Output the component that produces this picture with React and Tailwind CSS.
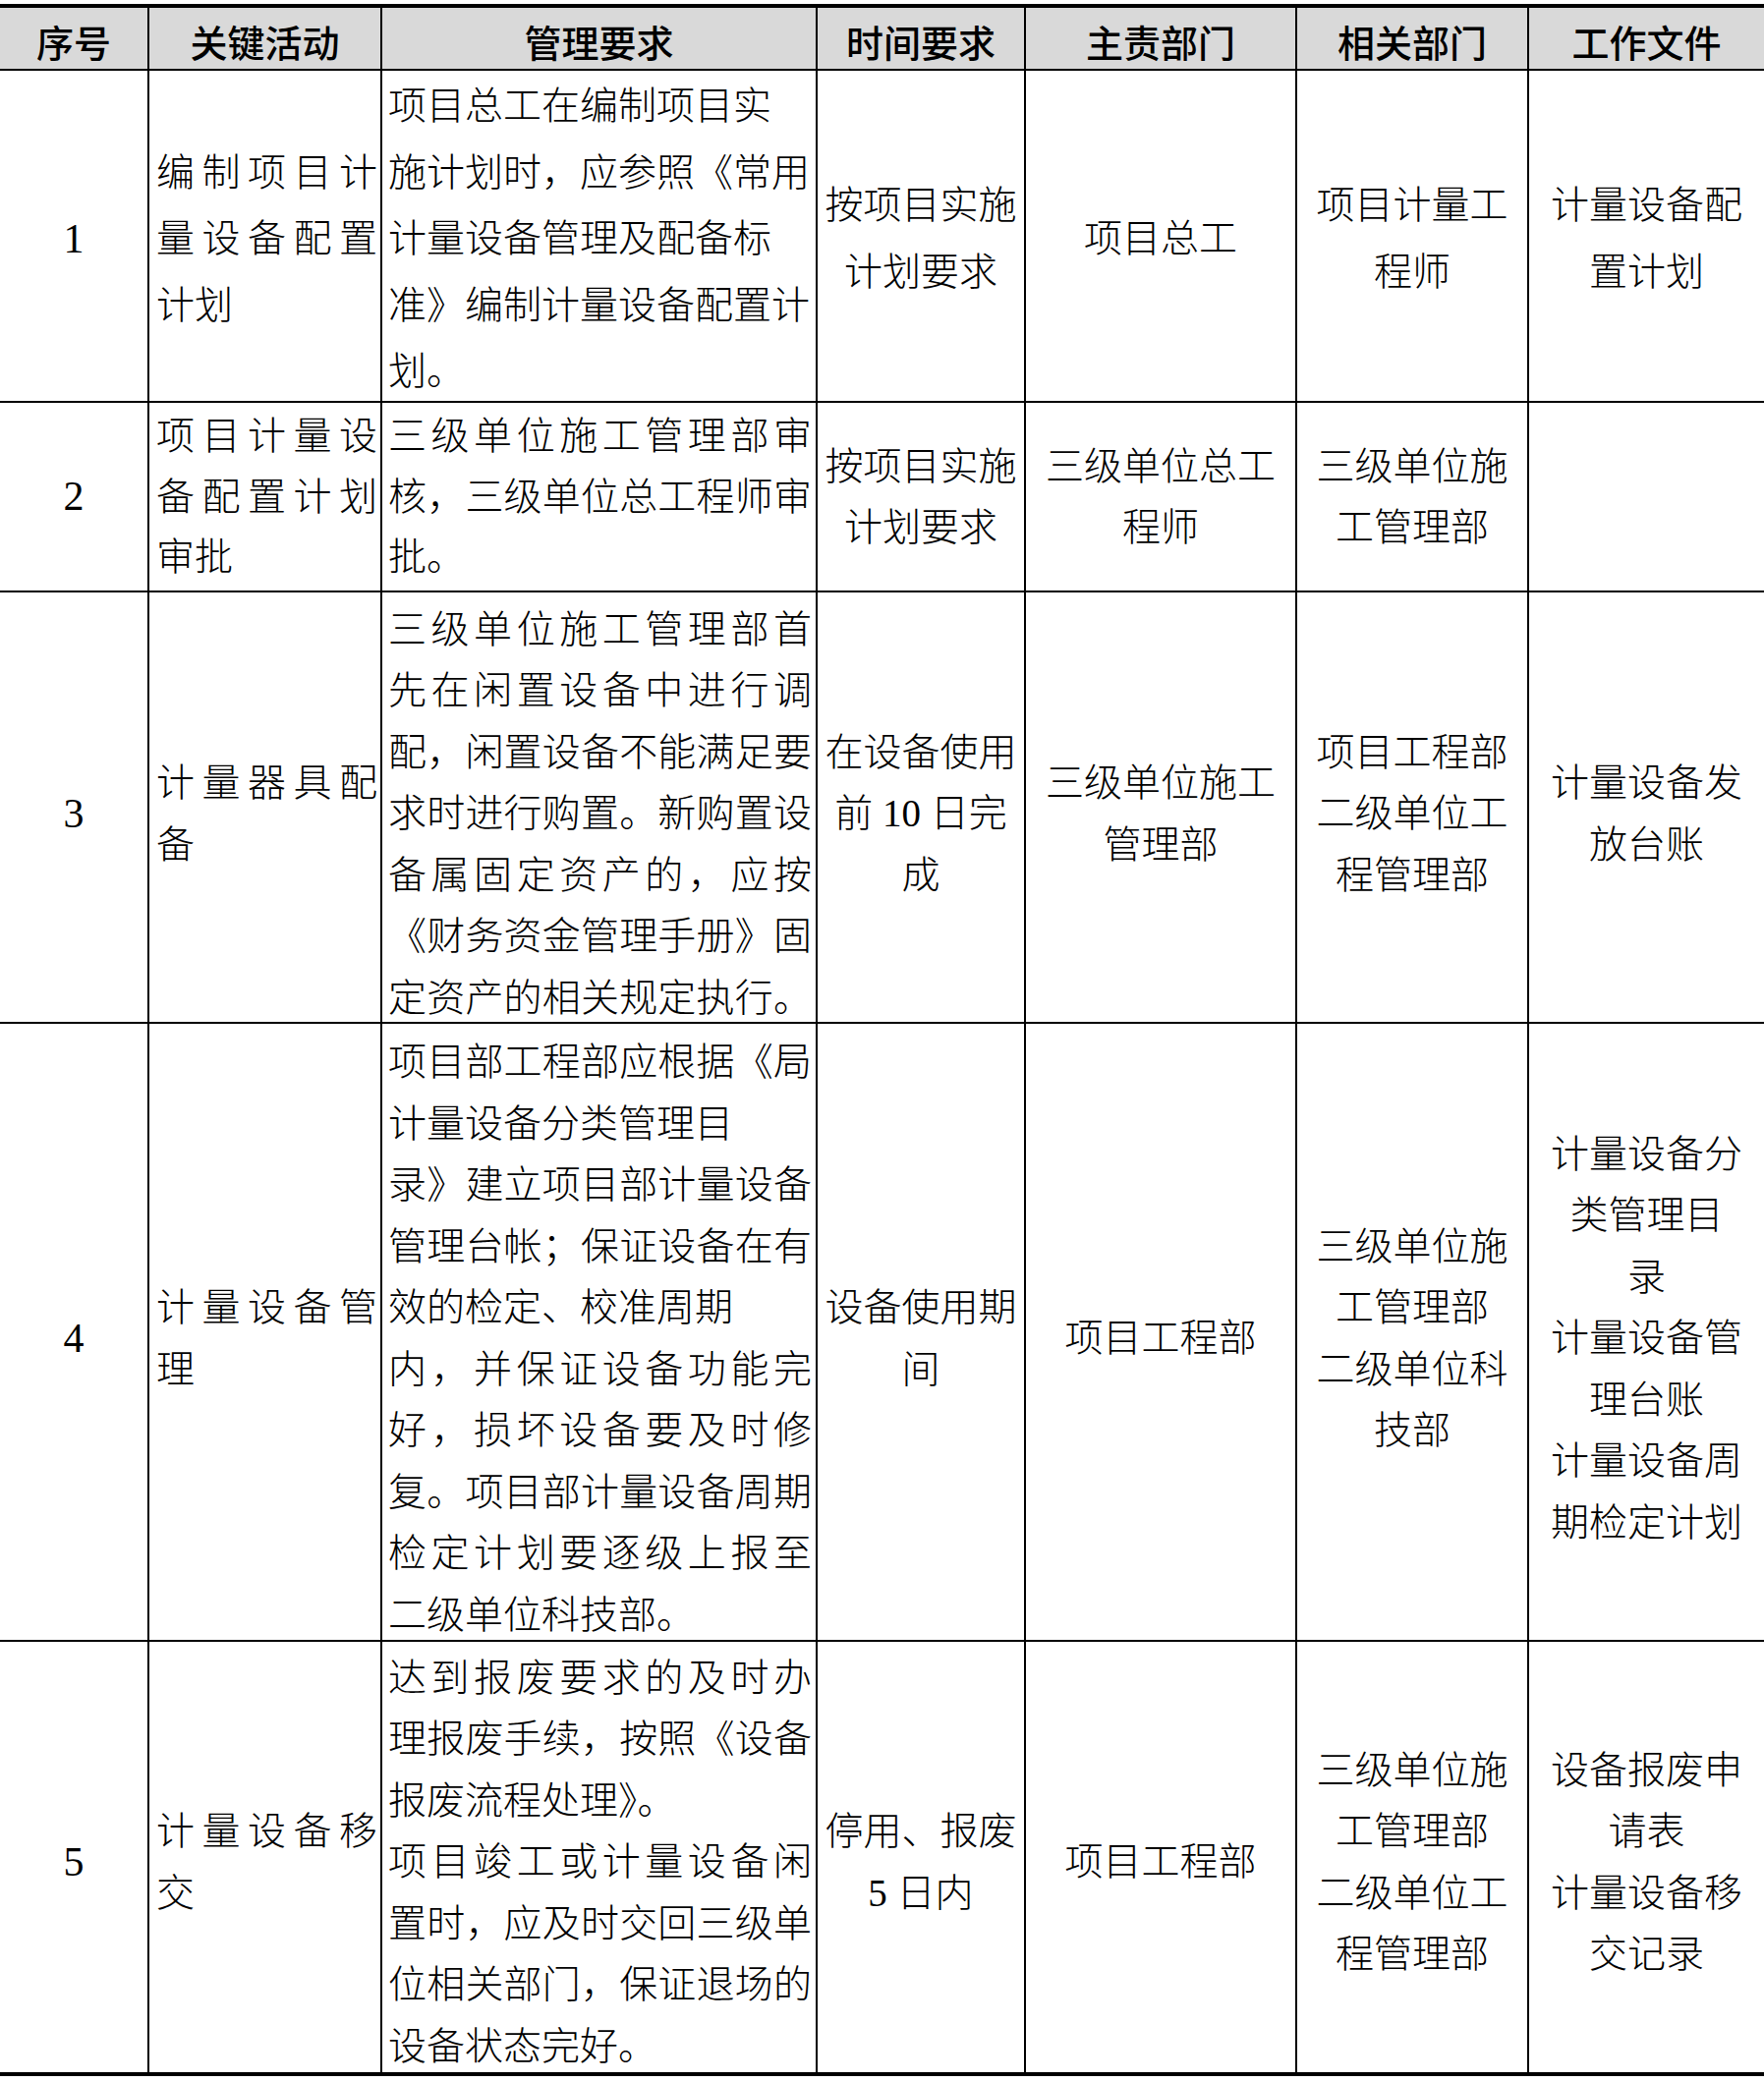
import React from "react";

const GRID = "grid grid-cols-[150px_237px_443px_212px_276px_236px_241px]";
const BODY_FONT = "font-['Liberation_Serif','Noto_Sans_CJK_SC',serif]";

// s: true = line is spread across the cell width
const rows = [
  {
    h: "h-[338px] grid-rows-[336px] border-b-2",
    pad: "pt-[6px]",
    lh: "leading-[67.6px]",
    no: "1",
    act: [["编制项目计", true], ["量设备配置", true], ["计划", false]],
    mgmt: [
      ["项目总工在编制项目实", false],
      ["施计划时，应参照《常用", false],
      ["计量设备管理及配备标", false],
      ["准》编制计量设备配置计", false],
      ["划。", false],
    ],
    time: ["按项目实施", "计划要求"],
    main: ["项目总工"],
    rel: ["项目计量工", "程师"],
    file: ["计量设备配", "置计划"],
  },
  {
    h: "h-[193px] grid-rows-[191px] border-b-2",
    pad: "",
    lh: "leading-[61.5px]",
    no: "2",
    act: [["项目计量设", true], ["备配置计划", true], ["审批", false]],
    mgmt: [
      ["三级单位施工管理部审", true],
      ["核，三级单位总工程师审", true],
      ["批。", false],
    ],
    time: ["按项目实施", "计划要求"],
    main: ["三级单位总工", "程师"],
    rel: ["三级单位施", "工管理部"],
    file: [],
  },
  {
    h: "h-[439px] grid-rows-[437px] border-b-2",
    pad: "pt-[14px]",
    lh: "leading-[62.5px]",
    no: "3",
    act: [["计量器具配", true], ["备", false]],
    mgmt: [
      ["三级单位施工管理部首", true],
      ["先在闲置设备中进行调", true],
      ["配，闲置设备不能满足要", true],
      ["求时进行购置。新购置设", true],
      ["备属固定资产的，应按", true],
      ["《财务资金管理手册》固", true],
      ["定资产的相关规定执行。", true],
    ],
    time: ["在设备使用", "前 10 日完", "成"],
    main: ["三级单位施工", "管理部"],
    rel: ["项目工程部", "二级单位工", "程管理部"],
    file: ["计量设备发", "放台账"],
  },
  {
    h: "h-[629px] grid-rows-[627px] border-b-2",
    pad: "pt-[14px]",
    lh: "leading-[62.5px]",
    no: "4",
    act: [["计量设备管", true], ["理", false]],
    mgmt: [
      ["项目部工程部应根据《局", true],
      ["计量设备分类管理目", false],
      ["录》建立项目部计量设备", true],
      ["管理台帐；保证设备在有", true],
      ["效的检定、校准周期", false],
      ["内，并保证设备功能完", true],
      ["好，损坏设备要及时修", true],
      ["复。项目部计量设备周期", true],
      ["检定计划要逐级上报至", true],
      ["二级单位科技部。", false],
    ],
    time: ["设备使用期", "间"],
    main: ["项目工程部"],
    rel: ["三级单位施", "工管理部", "二级单位科", "技部"],
    file: ["计量设备分", "类管理目", "录", "计量设备管", "理台账", "计量设备周", "期检定计划"],
  },
  {
    h: "h-[438px] grid-rows-[438px]",
    pad: "pt-[11px]",
    lh: "leading-[62.5px]",
    no: "5",
    act: [["计量设备移", true], ["交", false]],
    mgmt: [
      ["达到报废要求的及时办", true],
      ["理报废手续，按照《设备", true],
      ["报废流程处理》。", false],
      ["项目竣工或计量设备闲", true],
      ["置时，应及时交回三级单", true],
      ["位相关部门，保证退场的", true],
      ["设备状态完好。", false],
    ],
    time: ["停用、报废", "5 日内"],
    main: ["项目工程部"],
    rel: ["三级单位施", "工管理部", "二级单位工", "程管理部"],
    file: ["设备报废申", "请表", "计量设备移", "交记录"],
  },
];

const headers = ["序号", "关键活动", "管理要求", "时间要求", "主责部门", "相关部门", "工作文件"];

const Line = ({ text, spread }) =>
  spread ? (
    <div className="flex justify-between">
      {[...text].map((c, i) => (
        <span key={i}>{c}</span>
      ))}
    </div>
  ) : (
    <div className="whitespace-nowrap">{text}</div>
  );

const CenterCell = ({ lines, lh, pad }) => (
  <div className={`border-l-2 border-black flex flex-col justify-center items-center text-center min-h-0 ${lh} ${pad}`}>
    {lines.map((l, i) => (
      <div key={i} className="whitespace-pre">
        {l}
      </div>
    ))}
  </div>
);

export default function App() {
  return (
    <div className={`w-[1795px] bg-white text-black ${BODY_FONT} text-[39px] font-light`}>
      <div className="h-[4px]" />
      <div className="border-t-4 border-b-4 border-black">
        {/* Header */}
        <div className={`${GRID} h-[64px] border-b-2 border-black bg-[#d9d9d9]`}>
          {headers.map((h, i) => (
            <div
              key={h}
              className={`flex items-center justify-center pt-[5px] font-['Noto_Sans_CJK_SC',sans-serif] font-medium text-[38px] ${
                i > 0 ? "border-l-2 border-black" : ""
              }`}
            >
              {h}
            </div>
          ))}
        </div>

        {rows.map((r) => (
          <div key={r.no} className={`${GRID} ${r.h} border-black`}>
            <div className={`flex items-center justify-center text-[42px] font-['Liberation_Serif',serif] ${r.pad}`}>
              {r.no}
            </div>
            <div className={`border-l-2 border-black flex flex-col justify-center min-h-0 pl-[7px] pr-[3px] ${r.lh} ${r.pad}`}>
              {r.act.map(([t, s], i) => (
                <Line key={i} text={t} spread={s} />
              ))}
            </div>
            <div className={`border-l-2 border-black flex flex-col justify-center min-h-0 pl-[6px] pr-[4px] ${r.lh} ${r.pad}`}>
              {r.mgmt.map(([t, s], i) => (
                <Line key={i} text={t} spread={s} />
              ))}
            </div>
            <CenterCell lines={r.time} lh={r.lh} pad={r.pad} />
            <CenterCell lines={r.main} lh={r.lh} pad={r.pad} />
            <CenterCell lines={r.rel} lh={r.lh} pad={r.pad} />
            <CenterCell lines={r.file} lh={r.lh} pad={r.pad} />
          </div>
        ))}
      </div>
    </div>
  );
}
